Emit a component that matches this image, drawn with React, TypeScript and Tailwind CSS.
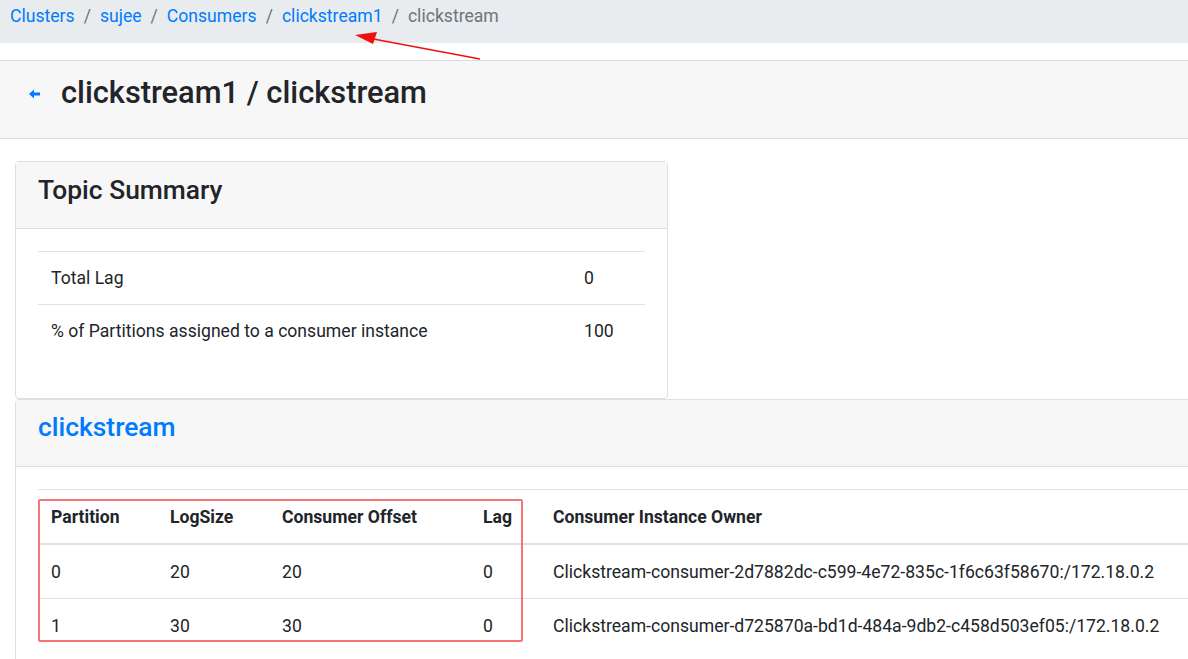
import React from 'react';

const rows = [
  { p: '0', log: '20', off: '20', lag: '0', owner: 'Clickstream-consumer-2d7882dc-c599-4e72-835c-1f6c63f58670:/172.18.0.2' },
  { p: '1', log: '30', off: '30', lag: '0', owner: 'Clickstream-consumer-d725870a-bd1d-484a-9db2-c458d503ef05:/172.18.0.2' },
];

const Sep = () => <span className="px-[9px] text-[#6c757d]">/</span>;

const cell = 'px-[13px] py-[13px] leading-[26px]';
const cell2 = 'px-[13px] py-[13.5px] leading-[26px]';

const App: React.FC = () => {
  return (
    <div className="relative w-full h-[659px] overflow-hidden bg-white text-[#212529] text-[17.6px]" style={{ fontFamily: 'Roboto, "Liberation Sans", sans-serif' }}>
      {/* breadcrumb */}
      <nav className="h-[43px] bg-[#e9ecef] pl-[10px] pt-[3px] flex items-start leading-[26px]">
        <a className="text-[#007bff]">Clusters</a>
        <Sep />
        <a className="text-[#007bff]">sujee</a>
        <Sep />
        <a className="text-[#007bff]">Consumers</a>
        <Sep />
        <a className="text-[#007bff]">clickstream1</a>
        <Sep />
        <span className="text-[#6c757d]">clickstream</span>
      </nav>

      {/* page header */}
      <div className="mt-[17px] h-[79px] bg-[#f7f7f7] border-y border-[#dcdcdc] flex items-center pl-[29px] pb-[12px]">
        <svg width="12" height="10" viewBox="0 0 12 10" className="mr-[20px]">
          <path d="M0 5 L5 0.5 L5 3.5 L11 3.5 L11 6.5 L5 6.5 L5 9.5 Z" fill="#007bff" />
        </svg>
        <h1 className="text-[30.8px] font-medium leading-none">clickstream1 / clickstream</h1>
      </div>

      <div className="pl-[15px] pt-[22px]">
        {/* topic summary card */}
        <div className="w-[653px] border border-[#dfdfdf] rounded-[4px]">
          <div className="h-[67px] bg-[#f7f7f7] border-b border-[#dfdfdf] pl-[22px] pb-[10px] flex items-center">
            <h4 className="text-[26.4px] font-medium leading-none">Topic Summary</h4>
          </div>
          <div className="px-[22px] pt-[22px] pb-[41px]">
            <table className="w-full border-collapse">
              <tbody>
                <tr className="border-t border-[#dee2e6]">
                  <td className={`w-[533px] ${cell}`}>Total Lag</td>
                  <td className={cell}>0</td>
                </tr>
                <tr className="border-t border-[#dee2e6]">
                  <td className={cell}>% of Partitions assigned to a consumer instance</td>
                  <td className={cell}>100</td>
                </tr>
              </tbody>
            </table>
          </div>
        </div>

        {/* topic card */}
        <div className="w-[1230px] border border-[#dfdfdf] rounded-[4px]">
          <div className="h-[67px] bg-[#f7f7f7] border-b border-[#dfdfdf] pl-[22px] pb-[12px] flex items-center">
            <h4 className="text-[26.4px] font-medium leading-none text-[#007bff]">clickstream</h4>
          </div>
          <div className="pl-[22px] pt-[22px] pb-[22px]">
            <table className="w-full border-collapse table-fixed">
              <thead>
                <tr className="border-t border-[#dee2e6] border-b-2 border-b-[#dee2e6]">
                  <th className={`w-[119px] text-left font-bold ${cell2}`}>Partition</th>
                  <th className={`w-[112px] text-left font-bold ${cell2}`}>LogSize</th>
                  <th className={`w-[201px] text-left font-bold ${cell2}`}>Consumer Offset</th>
                  <th className={`w-[71px] text-left font-bold ${cell2}`}>Lag</th>
                  <th className="text-left font-bold px-[12px] py-[13.5px] leading-[26px]">Consumer Instance Owner</th>
                </tr>
              </thead>
              <tbody>
                {rows.map((r, i) => (
                  <tr key={r.p} className={i > 0 ? 'border-t border-[#dee2e6]' : ''}>
                    <td className={cell2}>{r.p}</td>
                    <td className={cell2}>{r.log}</td>
                    <td className={cell2}>{r.off}</td>
                    <td className={cell2}>{r.lag}</td>
                    <td className="px-[12px] py-[13.5px] leading-[26px] whitespace-nowrap">{r.owner}</td>
                  </tr>
                ))}
              </tbody>
            </table>
          </div>
        </div>
      </div>

      {/* annotations */}
      <div className="absolute left-[38px] top-[499px] w-[485px] h-[143px] border-2 border-[#f77474] rounded-[2px] pointer-events-none" />
      <svg className="absolute left-0 top-0 pointer-events-none" width="1188" height="659">
        <line x1="480" y1="59" x2="368" y2="38" stroke="#f01010" strokeWidth="1.5" />
        <path d="M355 35 L377 32 L373 44 Z" fill="#f01010" />
      </svg>
    </div>
  );
};

export default App;
